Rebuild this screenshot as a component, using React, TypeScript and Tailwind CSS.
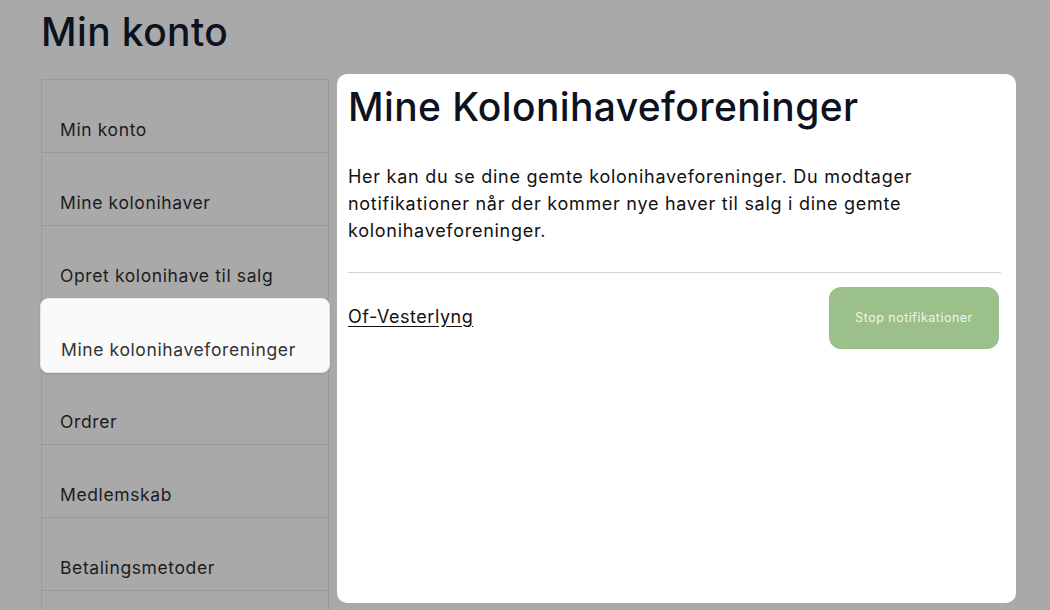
const items = [
  'Min konto',
  'Mine kolonihaver',
  'Opret kolonihave til salg',
  'Mine kolonihaveforeninger',
  'Ordrer',
  'Medlemskab',
  'Betalingsmetoder',
  '',
];

const font = { fontFamily: 'Inter, "Open Sans", sans-serif' };

export default function App() {
  return (
    <div className="h-[610px] w-[1050px] overflow-hidden bg-[#a9a9a9] pl-[41px]" style={font}>
      <h1 className="pt-[8px] text-[39px] leading-[48px] font-medium tracking-[0.01em] text-[#0d1220]">
        Min konto
      </h1>

      <div className="mt-[18px] flex items-start gap-[8px]">
        <nav className="mt-[5px] w-[288px] border border-b-0 border-[#999999]">
          {items.map((item, i) => {
            const active = item === 'Mine kolonihaveforeninger';
            return (
              <div
                key={i}
                className={
                  active
                    ? '-mx-[2px] -my-[1px] relative flex h-[75px] items-end rounded-lg border border-[#e5e5e5] bg-[#fafafa] pb-[9px] pl-[20px] shadow-sm'
                    : 'flex h-[73px] items-end border-b border-[#999999] pb-[9px] pl-[18px]'
                }
              >
                <span className={active ? 'text-[17.5px] leading-[26px] tracking-[0.035em] text-[#333333]' : 'text-[17.5px] leading-[26px] tracking-[0.035em] text-[#1c1c1c]'}>
                  {item}
                </span>
              </div>
            );
          })}
        </nav>

        <main className="h-[529px] w-[679px] rounded-[10px] bg-white pl-[11px] pr-[15px] pt-[10px]">
          <h2 className="text-[39px] leading-[46px] font-medium tracking-[0.01em] text-[#0d1220]">
            Mine Kolonihaveforeninger
          </h2>

          <p className="mt-[33px] max-w-[590px] text-[18px] leading-[27px] tracking-[0.04em] text-[#111111]">
            Her kan du se dine gemte kolonihaveforeninger. Du modtager
            notifikationer når der kommer nye haver til salg i dine gemte
            kolonihaveforeninger.
          </p>

          <div className="mt-[28px] border-t border-[#d4d4d4]" />

          <div className="mt-[14px] flex items-center justify-between pr-[2px]">
            <a href="#" className="mb-[4px] text-[18px] tracking-[0.03em] text-[#111111] underline underline-offset-[3px]">
              Of-Vesterlyng
            </a>
            <button className="h-[62px] w-[170px] rounded-[12px] bg-[#9bc08a] text-[12.5px] tracking-[0.04em] text-[#f0f5ec]">
              Stop notifikationer
            </button>
          </div>
        </main>
      </div>
    </div>
  );
}
